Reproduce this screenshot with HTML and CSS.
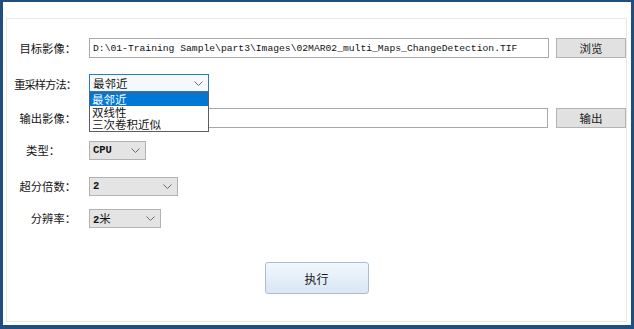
FILE: index.html
```html
<!DOCTYPE html>
<html lang="zh-CN">
<head>
    <meta charset="UTF-8">
    <title>超分辨率重采样</title>
    <link rel="stylesheet" href="styles.css">
</head>
<body>
    <div class="window">
        <div class="panel">
            <!-- 目标影像 -->
            <div class="row">
                <label class="label">目标影像：</label>
                <input class="textbox" type="text" readonly value="D:\01-Training Sample\part3\Images\02MAR02_multi_Maps_ChangeDetection.TIF">
                <button class="btn">浏览</button>
            </div>

            <!-- 重采样方法, 下拉列表展开 -->
            <div class="row row-method">
                <label class="label label-tight">重采样方法：</label>
                <div class="combo combo-focus">
                    <span>最邻近</span>
                    <svg class="chevron" width="9" height="5" viewBox="0 0 9 5"><polyline points="0.5,0.5 4.5,4.5 8.5,0.5" fill="none" stroke="#6a6a6a" stroke-width="1"/></svg>
                    <ul class="droplist">
                        <li class="selected">最邻近</li>
                        <li>双线性</li>
                        <li>三次卷积近似</li>
                    </ul>
                </div>
            </div>

            <!-- 输出影像 -->
            <div class="row row-output">
                <label class="label">输出影像：</label>
                <input class="textbox" type="text" readonly value="">
                <button class="btn btn-output">输出</button>
            </div>

            <div class="row row-type">
                <label class="label label-short">类型：</label>
                <div class="combo combo-type">
                    <span class="mono">CPU</span>
                    <svg class="chevron" width="9" height="5" viewBox="0 0 9 5"><polyline points="0.5,0.5 4.5,4.5 8.5,0.5" fill="none" stroke="#6a6a6a" stroke-width="1"/></svg>
                </div>
            </div>

            <div class="row row-scale">
                <label class="label">超分倍数：</label>
                <div class="combo combo-scale">
                    <span class="mono">2</span>
                    <svg class="chevron" width="9" height="5" viewBox="0 0 9 5"><polyline points="0.5,0.5 4.5,4.5 8.5,0.5" fill="none" stroke="#6a6a6a" stroke-width="1"/></svg>
                </div>
            </div>

            <div class="row row-res">
                <label class="label">分辨率：</label>
                <div class="combo combo-res">
                    <span><span class="mono">2</span>米</span>
                    <svg class="chevron" width="9" height="5" viewBox="0 0 9 5"><polyline points="0.5,0.5 4.5,4.5 8.5,0.5" fill="none" stroke="#6a6a6a" stroke-width="1"/></svg>
                </div>
            </div>

            <button class="run">执行</button>
        </div>
    </div>
</body>
</html>
```

FILE: styles.css
```css
/* Окно */
body {
    margin: 0;
    font-family: "Noto Sans CJK SC", "Noto Sans", sans-serif;
    background: #fff;
}

.window {
    width: 634px;
    height: 329px;
    box-sizing: border-box;
    border: 3px solid #1d4f80;
    border-top-width: 2px;
    border-bottom-width: 4px;
    padding: 16px 4px 3px 3px;
    background: #fff;
}

.panel {
    height: 100%;
    box-sizing: border-box;
    border: 1px solid #ebe7e7;
    padding-top: 19px;
    display: flex;
    flex-direction: column;
}

/* Строки формы */
.row {
    display: flex;
    align-items: center;
    height: 20px;
}

.row-method { margin-top: 16px; position: relative; z-index: 2; }
.row-output { margin-top: 14px; }
.row-type   { margin-top: 12px; }
.row-scale  { margin-top: 16px; }
.row-res    { margin-top: 12px; }

.label {
    width: 69px;
    margin-right: 13px;
    flex-shrink: 0;
    text-align: right;
    font-size: 11.3px;
    color: #141414;
    white-space: nowrap;
}

.label-tight {
    letter-spacing: -1px;
}

.label-short {
    width: 53px;
    margin-right: 29px;
}

.textbox {
    width: 460px;
    height: 20px;
    box-sizing: border-box;
    margin: 0;
    padding: 0 0 0 3px;
    border: 1px solid #a8a8a8;
    background: #fff;
    font-family: "Liberation Mono", monospace;
    font-size: 9.7px;
    color: #111;
    outline: none;
}

.btn {
    width: 70px;
    height: 20px;
    margin-left: 7px;
    padding: 0;
    border: 1px solid #b4b4b4;
    background: #e1e1e1;
    font-family: "Noto Sans CJK SC", sans-serif;
    font-size: 11.5px;
    color: #1a1a1a;
}

.btn-output {
    margin-left: 8px;
}

/* Выпадающие списки */
.combo {
    position: relative;
    height: 19px;
    box-sizing: border-box;
    display: flex;
    align-items: center;
    padding-left: 3px;
    border: 1px solid #b2b2b2;
    background: #e4e4e4;
    font-size: 11.5px;
    color: #111;
}

.combo .chevron {
    margin-left: auto;
    margin-right: 5px;
}

.mono {
    font-family: "Liberation Mono", monospace;
    font-weight: bold;
    font-size: 10.5px;
}

.combo-focus {
    width: 120px;
    height: 18px;
    margin-top: -2px;
    border-color: #2a78c8;
    background: #f6f9fc;
}

.combo-type  { width: 57px; }
.combo-scale { width: 89px; }
.combo-res   { width: 72px; }

.droplist {
    position: absolute;
    left: -1px;
    top: calc(100% + 1px);
    width: 120px;
    box-sizing: border-box;
    margin: 0;
    padding: 0;
    list-style: none;
    border: 1px solid #5e5e5e;
    background: #fff;
}

.droplist li {
    height: 12.5px;
    line-height: 12.5px;
    padding-left: 2px;
    font-size: 11.5px;
    color: #111;
    white-space: nowrap;
}

.droplist li.selected {
    background: #0078d7;
    color: #fff;
}

/* Кнопка запуска */
.run {
    align-self: center;
    width: 104px;
    height: 32px;
    margin-top: 34px;
    padding: 0;
    border: 1px solid #a9bcd4;
    border-radius: 3px;
    background: linear-gradient(#f2f7fd, #d9e6f5);
    font-family: "Noto Sans CJK SC", sans-serif;
    font-size: 12px;
    color: #1a1a1a;
}
```
